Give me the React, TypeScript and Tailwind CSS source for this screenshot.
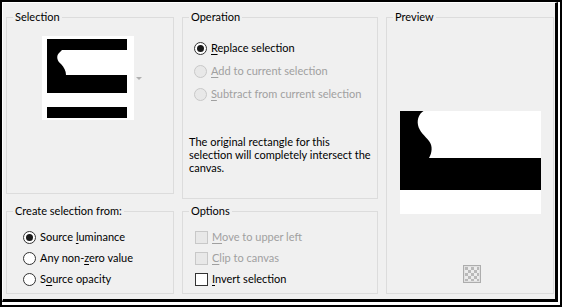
import type { ReactNode } from 'react';
import clsx from 'clsx';

const Group = ({
  title,
  className,
  children,
}: {
  title: string;
  className?: string;
  children?: ReactNode;
}) => (
  <fieldset className={clsx('border border-[#dcdcdc] px-[6px] min-w-0', className)}>
    <legend className="px-[2px] leading-[16px]">{title}</legend>
    {children}
  </fieldset>
);

const Radio = ({
  checked,
  disabled,
  className,
  children,
}: {
  checked?: boolean;
  disabled?: boolean;
  className?: string;
  children: ReactNode;
}) => (
  <div className={clsx('flex items-center', className)}>
    <span
      className={clsx(
        'w-[13px] h-[13px] rounded-full border flex items-center justify-center shrink-0',
        disabled ? 'border-[#c8c8c8] bg-[#e8e8e8]' : 'border-[#333333] bg-white'
      )}
    >
      {checked && <span className="w-[7px] h-[7px] rounded-full bg-[#1a1a1a]" />}
    </span>
    <span className={clsx('ml-[4px] whitespace-nowrap', disabled ? 'text-[#a0a0a0]' : 'text-black')}>
      {children}
    </span>
  </div>
);

const Check = ({ disabled, children }: { disabled?: boolean; children: ReactNode }) => (
  <div className="flex items-center h-[21px]">
    <span
      className={clsx(
        'w-[13px] h-[13px] border shrink-0',
        disabled ? 'border-[#c8c8c8] bg-[#e8e8e8]' : 'border-[#333333] bg-white'
      )}
    />
    <span className={clsx('ml-[4px] whitespace-nowrap', disabled ? 'text-[#a0a0a0]' : 'text-black')}>
      {children}
    </span>
  </div>
);

const U = ({ children }: { children: ReactNode }) => <span className="underline underline-offset-2">{children}</span>;

const Thumbnail = () => (
  <svg width="92" height="84" viewBox="0 0 92 84">
    <rect width="92" height="84" fill="#fff" />
    <rect x="5" y="3" width="80" height="54" fill="#000" />
    <path d="M20 14 H85 V39 H24 C24 35 22 31 19 28 C15 25 14 20 17 17 L20 14 Z" fill="#fff" />
    <rect x="5" y="71" width="80" height="11" fill="#000" />
  </svg>
);

const PreviewImage = () => (
  <svg width="141" height="103" viewBox="0 0 141 103">
    <rect width="141" height="103" fill="#fff" />
    <path d="M0 0 H23.5 C19 3 17 8 18 14 C19 20 25 25 29 30 C33 35 32 42 29 47 H0 Z" fill="#000" />
    <rect y="47" width="141" height="32" fill="#000" />
  </svg>
);

const CheckerButton = () => (
  <svg width="18" height="18" viewBox="0 0 18 18">
    <defs>
      <pattern id="chk" width="6" height="6" patternUnits="userSpaceOnUse" x="2" y="2">
        <rect width="6" height="6" fill="#ececec" />
        <rect width="3" height="3" fill="#b9b9b9" />
        <rect x="3" y="3" width="3" height="3" fill="#b9b9b9" />
      </pattern>
    </defs>
    <rect x="0.5" y="0.5" width="17" height="17" fill="#e1e1e1" stroke="#adadad" />
    <rect x="2" y="2" width="14" height="14" fill="url(#chk)" />
  </svg>
);

export default function App() {
  return (
    <div className="w-[562px] h-[307px] border-2 border-black bg-white font-[Lato,sans-serif] text-[11px] text-black">
      <div className="w-[556px] h-[300px] border-t border-l border-t-white border-l-white border-r-[3px] border-b-[3px] border-r-black border-b-black bg-[#f0f0f0] pt-[6px] pl-[3px] flex gap-[8px]">
        {/* Left column */}
        <div className="w-[168px] flex flex-col gap-[9px]">
          <Group title="Selection" className="h-[185px]">
            <div className="flex items-center mt-[11px] ml-[29px]">
              <Thumbnail />
              <span className="ml-[2px] w-0 h-0 border-l-[3px] border-r-[3px] border-t-[3px] border-l-transparent border-r-transparent border-t-[#b0b0b0]" />
            </div>
          </Group>
          <Group title="Create selection from:" className="h-[91px]">
            <div className="mt-[8px] ml-[10px]">
              <Radio checked className="h-[21px]">
                Source <U>l</U>uminance
              </Radio>
              <Radio className="h-[21px]">
                Any non-<U>z</U>ero value
              </Radio>
              <Radio className="h-[21px]">
                S<U>o</U>urce opacity
              </Radio>
            </div>
          </Group>
        </div>

        {/* Middle column */}
        <div className="w-[196px] flex flex-col gap-[4px]">
          <Group title="Operation" className="h-[190px]">
            <div className="mt-[12px] ml-[5px]">
              <Radio checked className="h-[23px]">
                <U>R</U>eplace selection
              </Radio>
              <Radio disabled className="h-[23px]">
                <U>A</U>dd to current selection
              </Radio>
              <Radio disabled className="h-[23px]">
                <U>S</U>ubtract from current selection
              </Radio>
            </div>
            <p className="mt-[29px] leading-[13px] whitespace-nowrap">
              The original rectangle for this
              <br />
              selection will completely intersect the
              <br />
              canvas.
            </p>
          </Group>
          <Group title="Options" className="h-[91px]">
            <div className="mt-[8px] ml-[6px]">
              <Check disabled>
                <U>M</U>ove to upper left
              </Check>
              <Check disabled>
                <U>C</U>lip to canvas
              </Check>
              <Check>
                <U>I</U>nvert selection
              </Check>
            </div>
          </Group>
        </div>

        {/* Right column */}
        <div className="w-[168px]">
          <Group title="Preview" className="h-[285px]">
            <div className="flex flex-col items-center">
              <div className="mt-[86px]">
                <PreviewImage />
              </div>
              <div className="mt-[51px] ml-[3px]">
                <CheckerButton />
              </div>
            </div>
          </Group>
        </div>
      </div>
    </div>
  );
}
